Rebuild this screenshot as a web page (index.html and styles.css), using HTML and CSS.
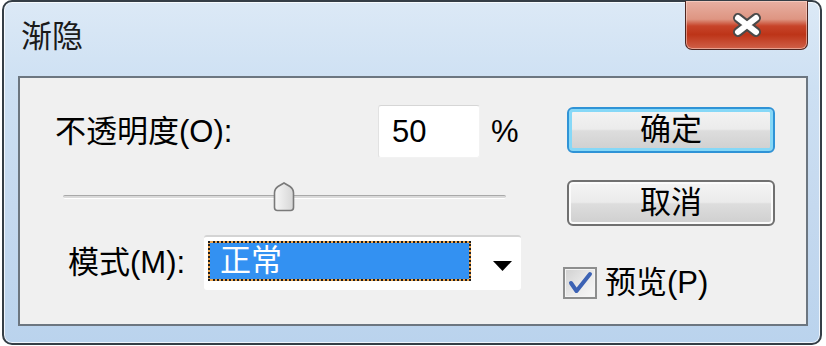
FILE: index.html
```html
<!DOCTYPE html>
<html lang="zh-CN">
<head>
<meta charset="utf-8">
<title>渐隐</title>
<link rel="stylesheet" href="styles.css">
</head>
<body>
<div class="window">
  <div class="titlebar">
    <span class="title-text">渐隐</span>
    <div class="close">
      <svg width="34" height="26" viewBox="0 0 34 26">
        <path d="M8,6 L26,20 M26,6 L8,20" stroke="#4a4a4a" stroke-width="10" stroke-linecap="round" fill="none"/>
        <path d="M8,6 L26,20 M26,6 L8,20" stroke="#ffffff" stroke-width="6" stroke-linecap="round" fill="none"/>
      </svg>
    </div>
  </div>
  <div class="client">
    <div class="left">
      <div class="row row-opacity">
        <span class="label label-opacity">不透明度(O):</span>
        <div class="num">50</div>
        <span class="pct">%</span>
      </div>
      <div class="slider">
        <div class="track"></div>
        <svg class="thumb" width="22" height="30" viewBox="0 0 22 30">
          <defs>
            <linearGradient id="tg" x1="0" y1="0" x2="1" y2="0">
              <stop offset="0" stop-color="#f7f7f7"/>
              <stop offset="1" stop-color="#d6d6d6"/>
            </linearGradient>
          </defs>
          <path d="M1.5,11 Q1.5,7 5,4.5 L11,1 L17,4.5 Q20.5,7 20.5,11 L20.5,25.5 Q20.5,28.5 17.5,28.5 L4.5,28.5 Q1.5,28.5 1.5,25.5 Z" fill="url(#tg)" stroke="#7a7a7a" stroke-width="1.6"/>
        </svg>
      </div>
      <div class="row row-mode">
        <span class="label label-mode">模式(M):</span>
        <div class="select">
          <div class="sel">正常</div>
          <svg class="arrow" width="19" height="10" viewBox="0 0 19 10"><polygon points="0,0 19,0 9.5,10" fill="#000"/></svg>
        </div>
      </div>
    </div>
    <div class="right">
      <div class="btn btn-default">确定</div>
      <div class="btn btn-cancel">取消</div>
      <div class="preview">
        <div class="check">
          <svg width="30" height="28" viewBox="0 0 30 28">
            <path d="M6,14 L11.5,22 L25,5" stroke="#3c62b4" stroke-width="4" fill="none" stroke-linejoin="round" stroke-linecap="round"/>
          </svg>
        </div>
        <span class="label">预览(P)</span>
      </div>
    </div>
  </div>
</div>
</body>
</html>
```
FILE: styles.css
```css
html, body {
  margin: 0;
  padding: 0;
  background: #ffffff;
}
body {
  width: 826px;
  height: 346px;
  overflow: hidden;
  font-family: "Liberation Sans", "Noto Sans CJK SC", sans-serif;
  font-size: 31px;
  color: #000000;
}
.window {
  margin-left: 2px;
  width: 820px;
  height: 345px;
  box-sizing: border-box;
  border: 2px solid #353e46;
  border-radius: 10px;
  background: linear-gradient(180deg, #dce9f6 0%, #cde0f3 25%, #c5d9ef 60%, #bad3ed 100%);
  box-shadow: inset 0 0 0 1px rgba(255, 255, 255, 0.75);
  display: flex;
  flex-direction: column;
}
.titlebar {
  height: 74px;
  display: flex;
  justify-content: space-between;
  align-items: flex-start;
}
.title-text {
  margin: 19px 0 0 17px;
  line-height: 31px;
  font-size: 31px;
  color: #1a1a1a;
}
.close {
  width: 123px;
  height: 49px;
  margin-right: 12px;
  margin-top: -1px;
  box-sizing: border-box;
  border: 1px solid #4e2520;
  border-top: none;
  border-radius: 0 0 7px 7px;
  background: linear-gradient(180deg, #e8b0a2 0%, #de9582 38%, #c7442a 52%, #bd3418 70%, #d06048 100%);
  box-shadow: inset 0 0 0 1px rgba(255, 225, 215, 0.5);
  display: flex;
  align-items: center;
  justify-content: center;
}
.client {
  margin: 0 12px 0 14px;
  height: 250px;
  box-sizing: border-box;
  border: 2px solid #6c7680;
  background: #f0f0f0;
  display: grid;
  grid-template-columns: 547px 208px;
}
.left {
  padding-top: 27px;
}
.row {
  display: flex;
  align-items: center;
}
.row-opacity {
  margin-left: 35px;
  height: 53px;
}
.label {
  line-height: 36px;
  white-space: nowrap;
}
.label-opacity {
  width: 323px;
}
.num {
  width: 102px;
  height: 53px;
  box-sizing: border-box;
  background: #ffffff;
  border: 1px solid;
  border-color: #d6d6d6 #f2f2f2 #f2f2f2 #e2e2e2;
  border-radius: 3px;
  padding-left: 13px;
  display: flex;
  align-items: center;
  font-size: 31px;
}
.pct {
  margin-left: 11px;
}
.slider {
  position: relative;
  margin: 24px 0 0 43px;
  width: 443px;
  height: 29px;
  display: flex;
  align-items: center;
}
.track {
  width: 100%;
  height: 2px;
  background: #dadada;
  border-top: 1px solid #a9a9a9;
  border-bottom: 1px solid #ffffff;
  border-radius: 2px;
}
.thumb {
  position: absolute;
  left: 210px;
  top: 0;
}
.row-mode {
  margin: 24px 0 0 48px;
  height: 55px;
}
.label-mode {
  width: 136px;
}
.select {
  width: 317px;
  height: 55px;
  box-sizing: border-box;
  background: #ffffff;
  border-top: 2px solid #d4d4d4;
  border-radius: 3px;
  padding: 4px 0 0 4px;
  display: flex;
  align-items: flex-start;
}
.sel {
  width: 263px;
  height: 40px;
  box-sizing: border-box;
  border: 2px dotted #1e1e1e;
  background: linear-gradient(#3391f2, #3391f2) padding-box, #eea54c border-box;
  color: #ffffff;
  padding-left: 10px;
  line-height: 36px;
  font-size: 31px;
}
.arrow {
  margin: 20px 0 0 22px;
}
.right {
  padding-top: 29px;
  display: flex;
  flex-direction: column;
}
.btn {
  width: 208px;
  height: 46px;
  box-sizing: border-box;
  border: 2px solid #707070;
  border-radius: 6px;
  background: linear-gradient(180deg, #f4f4f4 0%, #ebebeb 48%, #dddddd 52%, #cfcfcf 100%);
  box-shadow: inset 0 0 0 2px #fbfbfb;
  display: flex;
  align-items: center;
  justify-content: center;
  line-height: 36px;
}
.btn-default {
  border-color: #2f93d6;
  box-shadow: inset 0 0 0 3px #86d8f7;
}
.btn-cancel {
  margin-top: 27px;
}
.preview {
  margin-top: 39px;
  display: flex;
  align-items: center;
  gap: 8px;
  margin-left: -4px;
}
.check {
  width: 34px;
  height: 32px;
  box-sizing: border-box;
  border: 2px solid #8d8e8e;
  background: linear-gradient(135deg, #d0d0d0 0%, #ececec 60%, #f8f8f8 100%);
  box-shadow: inset 0 0 0 1px #f4f4f4;
  display: flex;
  align-items: center;
  justify-content: center;
}
```
